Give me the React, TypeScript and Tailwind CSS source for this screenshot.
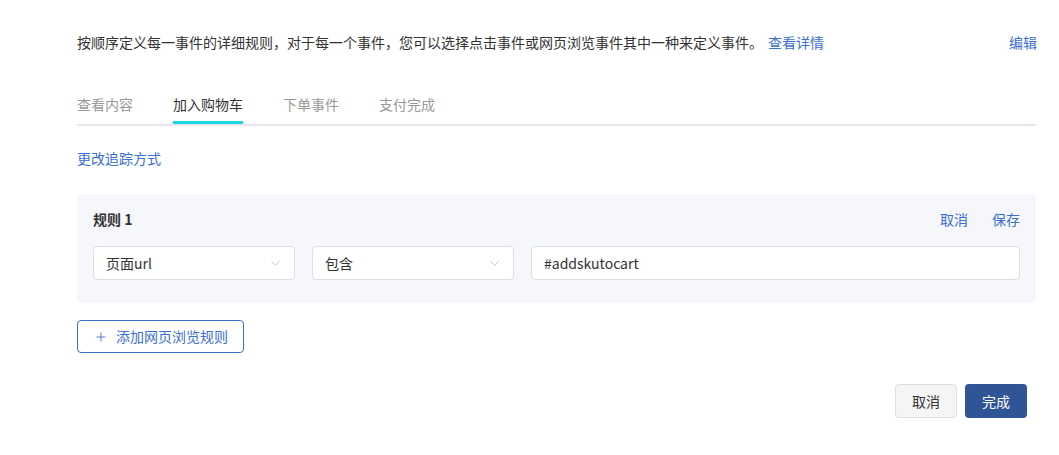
import React, { useState } from "react";
import { ChevronDown, Plus } from "lucide-react";

const tabs = ["查看内容", "加入购物车", "下单事件", "支付完成"];

const SelectBox = ({ value }: { value: string }) => (
    <div className="relative w-[202px] h-[34px] bg-white border border-[#dcdfe6] rounded-[4px] flex items-center pl-[12px]">
        <span className="text-[14px] text-[#333]">{value}</span>
        <ChevronDown className="absolute right-[11px] top-[9px] h-[15px] w-[15px] text-[#c0c4cc]" strokeWidth={1.5} />
    </div>
);

const App: React.FC = () => {
    const [active, setActive] = useState(1);

    return (
        <div
            className="w-[1059px] h-[455px] bg-white pl-[77px] pr-[23px] pt-[31px] text-[14px] text-[#333]"
            style={{ fontFamily: '"Noto Sans CJK SC", "Noto Sans", sans-serif' }}
        >
            <div className="flex items-center justify-between h-[22px]">
                <p className="leading-[22px]">
                    按顺序定义每一事件的详细规则，对于每一个事件，您可以选择点击事件或网页浏览事件其中一种来定义事件。
                    <a className="ml-[5px] text-[#3a6fcf] cursor-pointer">查看详情</a>
                </p>
                <a className="text-[#3a6fcf] cursor-pointer mr-[-1px]">编辑</a>
            </div>

            <div className="mt-[40px] flex gap-[40px] border-b-2 border-[#e4e7ed]">
                {tabs.map((t, i) => (
                    <div
                        key={t}
                        onClick={() => setActive(i)}
                        className={
                            i === active
                                ? "h-[31px] leading-[22px] text-[#333] border-b-[3px] border-[#18d9e0] -mb-[2px] cursor-pointer"
                                : "h-[31px] leading-[22px] text-[#999] cursor-pointer"
                        }
                    >
                        {t}
                    </div>
                ))}
            </div>

            <div className="mt-[21px] h-[22px] leading-[22px] text-[#3a6fcf]">更改追踪方式</div>

            <div className="mt-[25px] bg-[#f5f7fa] rounded-[4px] px-[16px] pt-[14px] pb-[23px]">
                <div className="flex items-center justify-between h-[22px]">
                    <span className="font-bold text-[14px] text-[#333]">规则 1</span>
                    <div className="flex gap-[24px] text-[#3a6fcf]">
                        <span>取消</span>
                        <span>保存</span>
                    </div>
                </div>
                <div className="mt-[16px] flex gap-[17px]">
                    <SelectBox value="页面url" />
                    <SelectBox value="包含" />
                    <div className="flex-1 h-[34px] bg-white border border-[#dcdfe6] rounded-[4px] flex items-center pl-[12px] text-[14px] text-[#333]">
                        #addskutocart
                    </div>
                </div>
            </div>

            <button className="mt-[17px] h-[33px] w-[167px] border border-[#3a6fcf] rounded-[4px] flex items-center pl-[16px] text-[#3a6fcf] bg-white">
                <Plus className="h-[14px] w-[14px] mr-[8px]" strokeWidth={1.5} />
                添加网页浏览规则
            </button>

            <div className="mt-[31px] flex justify-end gap-[8px] pr-[9px]">
                <button className="h-[34px] w-[62px] bg-[#f5f5f5] border border-[#dcdfe6] rounded-[4px] text-[#333]">取消</button>
                <button className="h-[34px] w-[62px] bg-[#2f5597] rounded-[4px] text-white">完成</button>
            </div>
        </div>
    );
};

export default App;
